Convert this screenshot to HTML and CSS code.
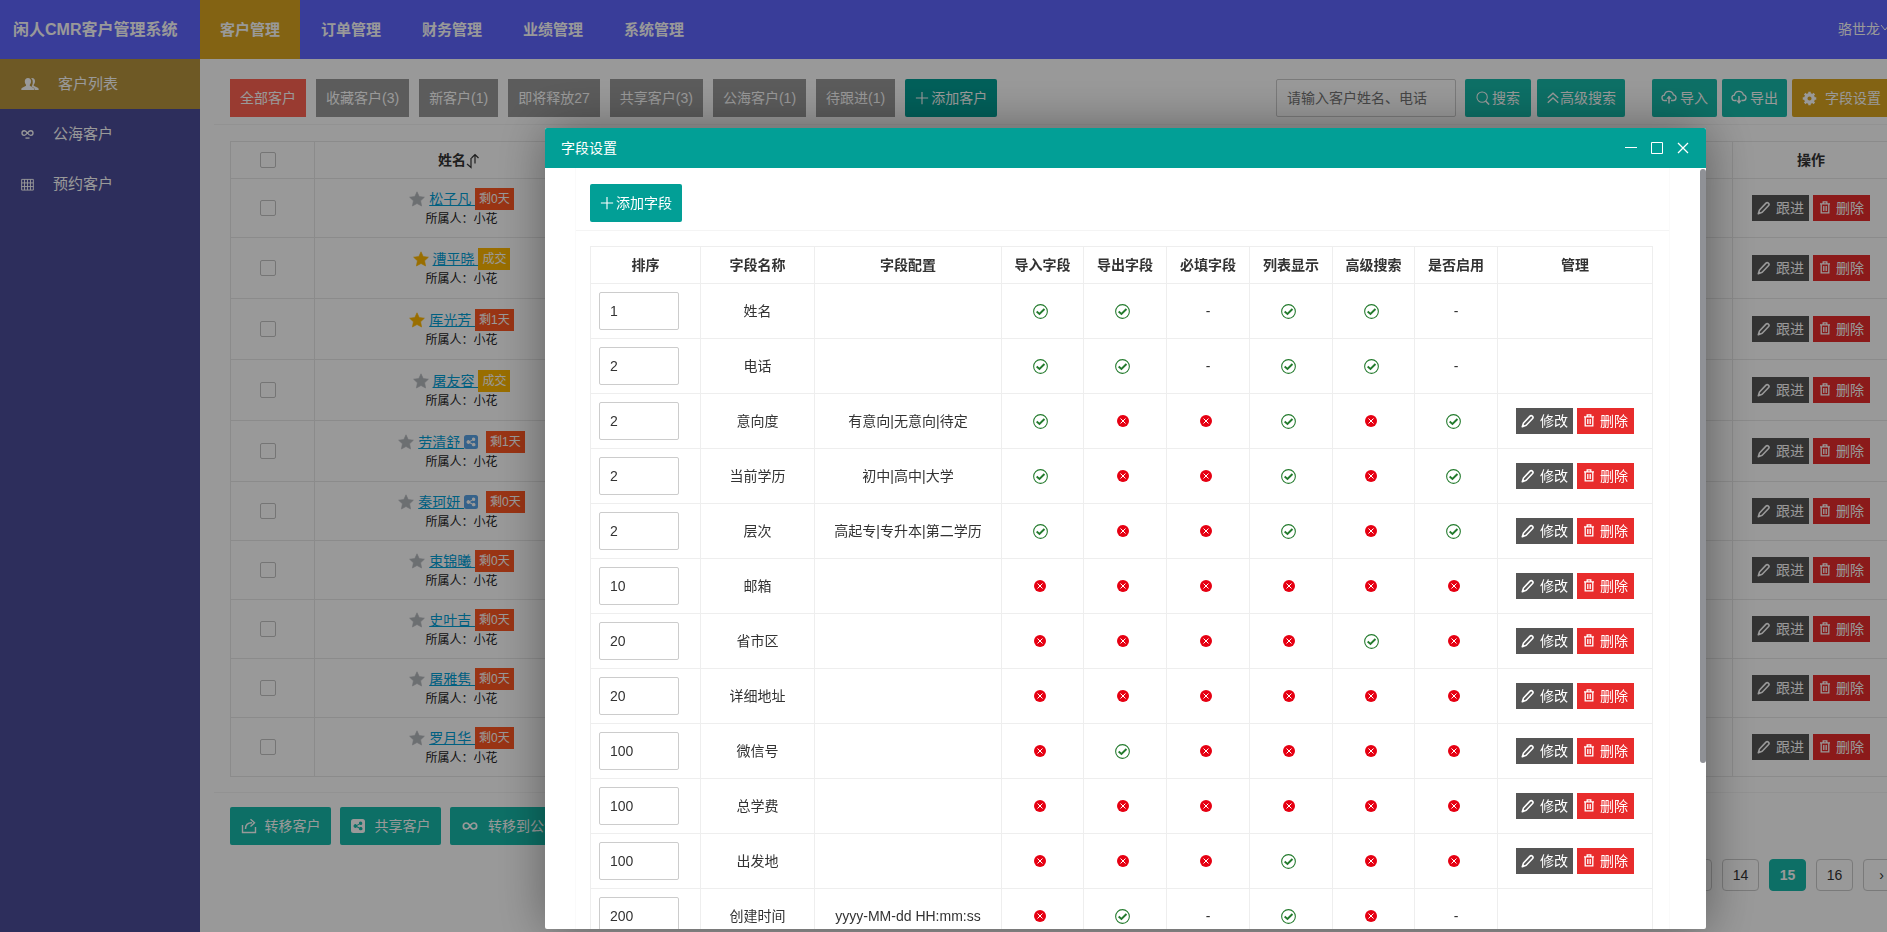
FILE: index.html
```html
<!DOCTYPE html>
<html lang="zh-CN">
<head>
<meta charset="utf-8">
<meta name="viewport" content="width=device-width, initial-scale=1">
<title>闲人CMR客户管理系统</title>
<link rel="stylesheet" href="styles.css">
</head>
<body>
<svg class="sprite" aria-hidden="true">
  <symbol id="i-plus" viewBox="0 0 16 16"><path d="M8 1v14M1 8h14" fill="none" stroke="currentColor" stroke-width="1.3"/></symbol>
  <symbol id="i-search" viewBox="0 0 16 16"><circle cx="7" cy="7" r="5.9" fill="none" stroke="currentColor" stroke-width="1.2"/><path d="M11 11.500l4 4" stroke="currentColor" stroke-width="1.8"/></symbol>
  <symbol id="i-up2" viewBox="0 0 16 16"><path d="M2 8l6-5.500 6 5.500M2 13.500l6-5.500 6 5.500" fill="none" stroke="currentColor" stroke-width="1.5"/></symbol>
  <symbol id="i-cloud-up" viewBox="0 0 16 16"><path d="M6 10.500H4a2.700 2.700 0 0 1-.6-5.400 4.600 4.600 0 0 1 9-.2A2.800 2.800 0 0 1 12 10.500h-2" fill="none" stroke="currentColor" stroke-width="1.3"/><path d="M8 13.500V7.500" stroke="currentColor" stroke-width="1.5"/><path d="M5.300 8.800L8 5.600l2.700 3.200z" fill="currentColor"/></symbol>
  <symbol id="i-cloud-down" viewBox="0 0 16 16"><path d="M5.500 10.500H4a2.700 2.700 0 0 1-.6-5.400 4.600 4.600 0 0 1 9-.2A2.800 2.800 0 0 1 12 10.500h-1.500" fill="none" stroke="currentColor" stroke-width="1.3"/><path d="M8 6v5" stroke="currentColor" stroke-width="1.5"/><path d="M5.300 10.500L8 14l2.700-3.500z" fill="currentColor"/></symbol>
  <symbol id="i-gear" viewBox="0 0 16 16"><circle cx="8" cy="8" r="4" fill="none" stroke="currentColor" stroke-width="3.600"/><path d="M8 .8v3M8 12.200v3M.8 8h3M12.200 8h3M2.900 2.900l2.100 2.100M11 11l2.100 2.100M2.900 13.100L5 11M11 5l2.100-2.100" stroke="currentColor" stroke-width="2.600"/></symbol>
  <symbol id="i-users" viewBox="0 0 18 14"><path d="M11 1c2 0 3 1.400 3 3.300 0 1.600-.6 2.600-1.300 3.400v1.100l4 2c.8.400 1 1 1 2.200h-4c0-1.700-.8-2.200-3.200-3.400.9-1.300 1.400-2.900 1.200-5.300C11.600 3 11 2 10 1.300z" fill="currentColor"/><path d="M7 1c2 0 3.100 1.400 3.100 3.300 0 1.600-.6 2.700-1.300 3.400v1.100l3.400 1.900c.8.400 1 1.100 1 2.300H.3c0-1.200.2-1.900 1-2.300l3.700-1.900V7.700C4.300 7 3.800 5.900 3.800 4.300 3.800 2.400 5 1 7 1z" fill="currentColor"/></symbol>
  <symbol id="i-loop" viewBox="0 0 16 12"><path d="M8 5.500C6.800 3.200 5.600 2 4 2a2.700 2.700 0 0 0 0 5.600C5.700 7.600 6.800 6 8 4.500 9.200 3 10.300 2 12 2a2.700 2.700 0 0 1 0 5.600C10.400 7.600 9.200 6.800 8 4.500" fill="none" stroke="currentColor" stroke-width="1.600"/><path d="M5.500 11h5" stroke="currentColor" stroke-width="1.600"/></symbol>
  <symbol id="i-inf" viewBox="0 0 16 12"><path d="M8 6C6.800 3.700 5.600 3 4.300 3a3 3 0 0 0 0 6C6 9 6.900 7.500 8 6c1.100-1.500 2-3 3.700-3a3 3 0 0 1 0 6C10.400 9 9.200 8.300 8 6" fill="none" stroke="currentColor" stroke-width="1.700"/></symbol>
  <symbol id="i-grid" viewBox="0 0 14 14"><path d="M.7 1.500h12.600v11.500H.7zM3.800 1.500V13M7 1.500V13M10.200 1.500V13M.7 5.300h12.600M.7 9.200h12.600" fill="none" stroke="currentColor" stroke-width="1"/></symbol>
  <symbol id="i-sort" viewBox="0 0 14 16"><path d="M5 5v9.500M1 11l4 3.500V12M9 10.500V1.500M5.500 5l3.500-3.500L12.500 5" fill="none" stroke="currentColor" stroke-width="1.200"/></symbol>
  <symbol id="i-star" viewBox="0 0 16 16"><path d="M8 .8l2.200 4.700 5.200.7-3.800 3.600 1 5.200L8 12.500 3.400 15l1-5.200L.6 6.200l5.200-.7z" fill="currentColor" stroke="currentColor" stroke-width=".6" stroke-linejoin="round"/></symbol>
  <symbol id="i-share" viewBox="0 0 14 14"><path fill-rule="evenodd" d="M2.500 0h9A2.500 2.500 0 0 1 14 2.500v9a2.500 2.500 0 0 1-2.500 2.500h-9A2.500 2.500 0 0 1 0 11.500v-9A2.500 2.500 0 0 1 2.500 0zM9.600 2.600a1.700 1.700 0 0 0-1.600 2.100L5.700 5.900a1.800 1.800 0 1 0 0 2.300L8 9.400a1.700 1.700 0 1 0 .5-1L6.200 7.200v-.4l2.300-1.200A1.700 1.700 0 1 0 9.600 2.600z" fill="currentColor"/></symbol>
  <symbol id="i-out" viewBox="0 0 16 16"><path d="M1.500 7v7.500h13V9" fill="none" stroke="currentColor" stroke-width="1.400"/><path d="M4.500 11C4.500 7 7 4.800 11 4.800" fill="none" stroke="currentColor" stroke-width="1.500"/><path d="M9.500 1.300L13.500 4.800l-4 3.600" fill="none" stroke="currentColor" stroke-width="1.400"/></symbol>
  <symbol id="i-edit" viewBox="0 0 14 14"><path d="M1.300 12.700l1.200-3.700 6.500-6.900c1.500-1.500 4 .8 2.600 2.400L5.200 11.300z" fill="none" stroke="currentColor" stroke-width="1.600" stroke-linejoin="round"/></symbol>
  <symbol id="i-trash" viewBox="0 0 12 14"><path d="M1 2.800h10M4.200 2.500V.8h3.600v1.700M2.200 3v8.800h7.600V3M4.800 5v5M7.200 5v5" fill="none" stroke="currentColor" stroke-width="1.300"/></symbol>
  <symbol id="i-yes" viewBox="0 0 14 14"><circle cx="7" cy="7" r="6.400" fill="none" stroke="currentColor" stroke-width="1"/><path d="M3.400 7.100l2.600 2.200 4.700-4.600" fill="none" stroke="currentColor" stroke-width="1.800"/></symbol>
  <symbol id="i-no" viewBox="0 0 12 12"><circle cx="6" cy="6" r="6" fill="currentColor"/><path d="M3.500 3.500l5 5M8.500 3.500l-5 5" stroke="#fff" stroke-width="1"/></symbol>
</svg>

<header class="topbar">
  <h1 class="brand">闲人CMR客户管理系统</h1>
  <nav class="topnav" aria-label="主导航">
    <a class="is-on" href="#">客户管理</a>
    <a href="#">订单管理</a>
    <a href="#">财务管理</a>
    <a href="#">业绩管理</a>
    <a href="#">系统管理</a>
  </nav>
  <a class="user" href="#">骆世龙<svg width="10" height="10" viewBox="0 0 10 10"><path d="M1 1l4 5 4-5" fill="none" stroke="currentColor"/></svg></a>
</header>

<div class="shell">
  <aside class="side">
    <a class="is-on" href="#"><svg width="18" height="14"><use href="#i-users"/></svg>客户列表</a>
    <a href="#"><svg width="13" height="10"><use href="#i-loop"/></svg>公海客户</a>
    <a href="#"><svg width="13" height="13"><use href="#i-grid"/></svg>预约客户</a>
  </aside>

  <main class="main">
    <div class="tools">
      <div class="tabs">
        <button class="tab is-on" type="button">全部客户</button>
        <button class="tab" type="button">收藏客户(3)</button>
        <button class="tab" type="button">新客户(1)</button>
        <button class="tab" type="button">即将释放27</button>
        <button class="tab" type="button">共享客户(3)</button>
        <button class="tab" type="button">公海客户(1)</button>
        <button class="tab" type="button">待跟进(1)</button>
        <button class="btn btn-add" type="button"><svg width="14" height="14"><use href="#i-plus"/></svg>添加客户</button>
      </div>
      <div class="find">
        <input class="keyword" type="text" aria-label="搜索客户" placeholder="请输入客户姓名、电话">
        <button class="btn btn-find" type="button"><svg width="14" height="14"><use href="#i-search"/></svg>搜索</button>
        <button class="btn btn-more" type="button"><svg width="14" height="14"><use href="#i-up2"/></svg>高级搜索</button>
      </div>
      <div class="io">
        <button class="btn" type="button"><svg width="16" height="16"><use href="#i-cloud-up"/></svg>导入</button>
        <button class="btn" type="button"><svg width="16" height="16"><use href="#i-cloud-down"/></svg>导出</button>
        <button class="btn btn-gold" type="button"><svg width="15" height="15"><use href="#i-gear"/></svg>字段设置</button>
      </div>
    </div>

    <div class="list">
      <table class="grid customers">
        <colgroup><col class="c-pick"><col class="c-name"><col><col class="c-act"></colgroup>
        <thead>
          <tr><th><input type="checkbox" aria-label="全选"></th><th>姓名<svg class="sort" width="14" height="16"><use href="#i-sort"/></svg></th><th></th><th>操作</th></tr>
        </thead>
        <tbody id="customers"></tbody>
      </table>
    </div>

    <div class="batch">
      <button class="btn" type="button"><svg width="16" height="16"><use href="#i-out"/></svg>转移客户</button>
      <button class="btn" type="button"><svg width="14" height="14"><use href="#i-share"/></svg>共享客户</button>
      <button class="btn" type="button"><svg width="16" height="12"><use href="#i-inf"/></svg>转移到公海</button>
    </div>
    <nav class="pages" aria-label="分页">
      <a href="#">13</a><a href="#">14</a><a class="is-on" href="#" aria-current="page">15</a><a href="#">16</a><a href="#" aria-label="下一页">›</a>
    </nav>
  </main>
</div>

<div class="shade"></div>
<section class="dialog" role="dialog" aria-labelledby="dialog-title">
  <header class="dialog-head">
    <h2 id="dialog-title">字段设置</h2>
    <button type="button" aria-label="最小化"><svg width="12" height="12" viewBox="0 0 12 12"><path d="M0 5.500h12" stroke="currentColor"/></svg></button>
    <button type="button" aria-label="最大化"><svg width="12" height="12" viewBox="0 0 12 12"><path d="M.5 .5h11v11H.5z" fill="none" stroke="currentColor"/></svg></button>
    <button type="button" aria-label="关闭"><svg width="12" height="12" viewBox="0 0 12 12"><path d="M1 1l10 10M11 1L1 11" stroke="currentColor" stroke-width="1.300"/></svg></button>
  </header>
  <div class="dialog-body">
    <div class="card">
      <div class="card-head">
        <button class="btn btn-add" type="button"><svg width="14" height="14"><use href="#i-plus"/></svg>添加字段</button>
      </div>
      <div class="card-body">
        <table class="grid fields">
          <colgroup><col class="f-sort"><col class="f-name"><col class="f-conf"><col class="f-flag-s"><col class="f-flag"><col class="f-flag"><col class="f-flag"><col class="f-flag-s"><col class="f-flag"><col></colgroup>
          <thead>
            <tr><th>排序</th><th>字段名称</th><th>字段配置</th><th>导入字段</th><th>导出字段</th><th>必填字段</th><th>列表显示</th><th>高级搜索</th><th>是否启用</th><th>管理</th></tr>
          </thead>
          <tbody id="fields"></tbody>
        </table>
      </div>
    </div>
  </div>
  <div class="thumb" aria-hidden="true"></div>
</section>
<script src="app.js"></script>
</body>
</html>
```
FILE: styles.css
```css
* { box-sizing: border-box; }
body {
  margin: 0;
  height: 100vh;
  display: flex;
  flex-direction: column;
  overflow: hidden;
  background: #fff;
  color: #333;
  font: 14px/24px "Liberation Sans", "Noto Sans CJK SC", sans-serif;
}
a { color: inherit; text-decoration: none; }
h1, h2 { margin: 0; }
button, input { font: inherit; }
button { border: 0; cursor: pointer; white-space: nowrap; }
svg { flex: none; }
.sprite { position: absolute; width: 0; height: 0; }

/* top bar */
.topbar { display: flex; flex: none; height: 59px; background: #5f66ff; color: #fff; line-height: 59px; }
.brand { width: 200px; padding-left: 13px; font-size: 16px; line-height: 59px; white-space: nowrap; }
.topnav { display: flex; gap: 1px; font-size: 15px; font-weight: 700; white-space: nowrap; }
.topnav a { padding: 0 20px; }
.topnav .is-on { background: #daa520; }
.user { margin-left: auto; white-space: nowrap; }
.user svg { margin-right: -3px; }

/* side menu */
.shell { display: flex; flex: 1; min-height: 0; }
.side { flex: none; width: 200px; background: #4c4d99; color: #fff; font-size: 15px; }
.side a { display: flex; align-items: center; gap: 19px; height: 50px; padding-left: 21px; }
.side .is-on { background: #b8943f; }

/* buttons */
.btn {
  display: inline-flex; align-items: center; justify-content: center; gap: 3px;
  height: 38px; padding: 0 10px; border-radius: 2px; background: #16baaa; color: #fff;
}
.btn-add { gap: 2px; background: #029f96; }
.btn-find { gap: 2px; padding: 0 11px; }
.btn-more { gap: 0; padding: 0 9px; }
.tab { height: 38px; padding: 0 10px; background: #999; color: #fff; }
.tab.is-on { background: #ff6352; }

/* main area */
.main { flex: 1; min-width: 0; overflow: hidden; }
.tools { display: flex; margin-left: 14px; padding: 20px 0 7px 16px; border-bottom: 1px solid #f4f4f4; }
.tabs { display: flex; gap: 10px; }
.find { display: flex; gap: 6px; margin-left: auto; }
.keyword { width: 180px; height: 38px; margin-right: 3px; padding: 0 10px; border: 1px solid #ccc; border-radius: 2px; background: #fff; }
.keyword::placeholder { color: #757575; opacity: 1; }
.io { display: flex; gap: 5px; margin: 0 -6px 0 27px; }
.io .btn { padding: 0 9px; }
.io .btn-gold { gap: 8px; padding: 0 12px 0 10px; background: #daa520; }

.grid { width: 100%; border-collapse: collapse; table-layout: fixed; }
.grid th, .grid td { padding: 0; border: 1px solid #eee; text-align: center; }
.grid th { height: 37px; font-weight: 700; }

.list { margin: 0 -3px 0 14px; padding: 16px 0 15px 16px; border-bottom: 1px solid #f4f4f4; }
.customers th, .customers td { border-color: #e8e8e8; }
.customers td { height: 59px; line-height: 20px; }
.customers .tall td { height: 61px; }
.customers th:nth-child(2) { padding-right: 5px; }
.c-pick { width: 84px; }
.c-name { width: 294px; }
.c-act { width: 157px; }
.customers input { appearance: none; display: block; width: 16px; height: 16px; margin: 0 0 0 29px; border: 1px solid #c4c4c4; border-radius: 2px; background: #fff; }
.sort { vertical-align: middle; }
.who { display: flex; justify-content: center; align-items: center; height: 22px; gap: 4px; }
.who a { color: #01a0d8; text-decoration: underline; white-space: pre; margin-right: -4px; }
.star { color: #b5b9bd; }
.star.is-on { color: #ffb800; }
.share { color: #5aa4e6; margin-right: 4px; }
.badge { padding: 0 4px; background: #ff5722; color: #fff; font-size: 12px; line-height: 22px; }
.badge.deal { background: #ffb800; }
.owner { font-size: 12px; line-height: 18px; color: #222; }

.acts { display: flex; justify-content: center; gap: 4px; }
.mini { display: inline-flex; align-items: center; justify-content: center; gap: 5px; width: 57px; height: 26px; padding: 0; background: #555; color: #fff; }
.mini.del { background: #e82c2c; }

.batch { display: flex; gap: 9px; padding: 14px 0 0 30px; }
.batch .btn { min-width: 101px; gap: 8px; padding: 0 10px; }
.batch .btn:nth-child(2) { gap: 10px; }
.batch .btn:nth-child(3) { gap: 10px; padding: 0 12px; }
.pages { display: flex; justify-content: flex-end; gap: 10px; margin: 14px -13px 0 0; line-height: 30px; text-align: center; }
.pages a { width: 37px; border: 1px solid #ccc; border-radius: 4px; }
.pages .is-on { background: #16baaa; border-color: #16baaa; color: #fff; font-weight: 700; }

/* dialog */
.shade { position: fixed; inset: 0; background: rgba(0, 0, 0, .4); }
.dialog {
  position: fixed; top: 128px; right: 181px; bottom: 3px; left: 545px;
  display: flex; flex-direction: column; overflow: hidden;
  border-radius: 2px; background: #fff; box-shadow: 1px 1px 50px rgba(0, 0, 0, .4);
}
.dialog-head { display: flex; align-items: center; flex: none; gap: 14px; height: 40px; padding: 0 17px 0 16px; background: #029f96; color: #fff; }
.dialog-head h2 { flex: 1; font-size: 14px; font-weight: 400; }
.dialog-head button { display: flex; padding: 0; background: none; color: #fff; }
.dialog-body { flex: 1; min-height: 0; overflow: hidden; padding: 0 36px 0 30px; }
.card { border: 1px solid #fafafa; border-top: 0; }
.card-head { padding: 16px 14px 8px; border-bottom: 1px solid #f4f4f4; }
.card-head .btn { display: flex; }
.card-body { padding: 15px 14px; }
.thumb { position: absolute; top: 41px; right: 0; width: 6px; height: 594px; border-radius: 3px; background: #8f9196; }
.f-sort { width: 110px; }
.f-name { width: 114px; }
.f-conf { width: 187px; }
.f-flag { width: 83px; }
.f-flag-s { width: 82px; }
.fields { max-width: calc(100% - 2px); }
.fields td { height: 55px; }
.fields input { display: block; width: 80px; height: 38px; margin-left: 8px; padding: 0 10px; border: 1px solid #ccc; border-radius: 2px; color: #333; }
.fields .flag svg { display: block; margin: 0 auto; }
.fields .flag { padding-right: 5px; }
.fields .flag.fixed { padding-right: 0; }
.yes { color: #227a2c; }
.no { color: #e60012; }
```
FILE: app.js
```js
const icon = (name, w, h, cls = "") =>
  `<svg class="${cls}" width="${w}" height="${h}" aria-hidden="true"><use href="#i-${name}"/></svg>`;

const actions = (first) =>
  `<div class="acts"><button class="mini" type="button">${icon("edit", 14, 14)}${first}</button>` +
  `<button class="mini del" type="button">${icon("trash", 12, 14)}删除</button></div>`;

// name, starred, shared, badge, tall row
const customers = [
  ["松子凡", 0, 0, "剩0天", 0],
  ["漕平晓", 1, 0, "成交", 1],
  ["厍光芳", 1, 0, "剩1天", 1],
  ["屠友容", 0, 0, "成交", 1],
  ["劳清舒", 0, 1, "剩1天", 1],
  ["秦珂妍", 0, 1, "剩0天", 0],
  ["束锦曦", 0, 0, "剩0天", 0],
  ["史叶吉", 0, 0, "剩0天", 0],
  ["屠雅隽", 0, 0, "剩0天", 0],
  ["罗月华", 0, 0, "剩0天", 0],
];

document.getElementById("customers").innerHTML = customers.map(([name, star, shared, badge, tall]) => `
  <tr class="${tall ? "tall" : ""}">
    <td><input type="checkbox" aria-label="选择${name}"></td>
    <td>
      <div class="who">${icon("star", 16, 16, star ? "star is-on" : "star")}<a href="#">${name} </a>${shared ? icon("share", 14, 14, "share") : ""}<span class="badge ${badge === "成交" ? "deal" : ""}">${badge}</span></div>
      <div class="owner">所属人：小花</div>
    </td>
    <td></td>
    <td>${actions("跟进")}</td>
  </tr>`).join("");

// order, name, options, flags (y = on, n = off, - = fixed), editable
const fields = [
  [1, "姓名", "", "yy-yy-", 0],
  [2, "电话", "", "yy-yy-", 0],
  [2, "意向度", "有意向|无意向|待定", "ynnyny", 1],
  [2, "当前学历", "初中|高中|大学", "ynnyny", 1],
  [2, "层次", "高起专|专升本|第二学历", "ynnyny", 1],
  [10, "邮箱", "", "nnnnnn", 1],
  [20, "省市区", "", "nnnnyn", 1],
  [20, "详细地址", "", "nnnnnn", 1],
  [100, "微信号", "", "nynnnn", 1],
  [100, "总学费", "", "nnnnnn", 1],
  [100, "出发地", "", "nnnynn", 1],
  [200, "创建时间", "yyyy-MM-dd HH:mm:ss", "ny-yn-", 0],
];

const flag = (f) => f === "y" ? icon("yes", 15, 15, "yes") : f === "n" ? icon("no", 12, 12, "no") : "-";

document.getElementById("fields").innerHTML = fields.map(([order, name, conf, flags, editable]) => `
  <tr>
    <td><input type="text" value="${order}" aria-label="${name}排序"></td>
    <td>${name}</td>
    <td>${conf}</td>
    ${[...flags].map((f) => `<td class="flag ${f === "-" ? "fixed" : ""}">${flag(f)}</td>`).join("")}
    <td>${editable ? actions("修改") : ""}</td>
  </tr>`).join("");
```
